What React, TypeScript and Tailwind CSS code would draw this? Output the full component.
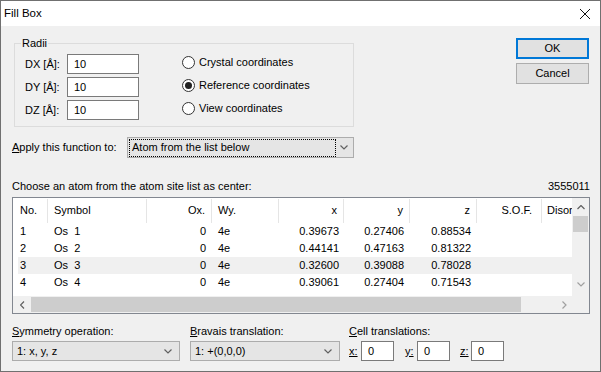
import React from 'react';

const ui = { fontFamily: '"Liberation Sans", Arial, sans-serif' };

const Chevron: React.FC<{ dir?: 'down' | 'up' | 'left' | 'right'; color?: string }> = ({ dir = 'down', color = '#606060' }) => {
  const d = {
    down: 'M0.5 0.5 L4 4 L7.5 0.5',
    up: 'M0.5 4 L4 0.5 L7.5 4',
    left: 'M4 0.5 L0.5 4 L4 7.5',
    right: 'M0.5 0.5 L4 4 L0.5 7.5',
  }[dir];
  const vert = dir === 'down' || dir === 'up';
  return (
    <svg width={vert ? 8 : 5} height={vert ? 5 : 8} viewBox={vert ? '0 0 8 5' : '0 0 5 8'}>
      <path d={d} fill="none" stroke={color} strokeWidth="1.2" />
    </svg>
  );
};

const TextBox: React.FC<{ value: string; w: string }> = ({ value, w }) => (
  <div className={`${w} h-[20px] bg-white border border-[#7a7a7a] flex items-center pl-[6px]`}>{value}</div>
);

const Radio: React.FC<{ label: string; checked?: boolean }> = ({ label, checked }) => (
  <div className="h-[20px] flex items-center">
    <div className="w-[13px] h-[13px] rounded-full border border-[#333] bg-white flex items-center justify-center">
      {checked && <div className="w-[7px] h-[7px] rounded-full bg-[#222]" />}
    </div>
    <span className="ml-[4px]">{label}</span>
  </div>
);

type Row = { no: string; sym: string; ox: string; wy: string; x: string; y: string; z: string };

const rows: Row[] = [
  { no: '1', sym: 'Os  1', ox: '0', wy: '4e', x: '0.39673', y: '0.27406', z: '0.88534' },
  { no: '2', sym: 'Os  2', ox: '0', wy: '4e', x: '0.44141', y: '0.47163', z: '0.81322' },
  { no: '3', sym: 'Os  3', ox: '0', wy: '4e', x: '0.32600', y: '0.39088', z: '0.78028' },
  { no: '4', sym: 'Os  4', ox: '0', wy: '4e', x: '0.39061', y: '0.27404', z: '0.71543' },
];

const Sep = () => <div className="w-px h-[24px] bg-[#e5e5e5] shrink-0" />;

function AtomList() {
  return (
    <div className="h-[117px] border border-[#828790] bg-white flex">
      <div className="w-[559px] flex flex-col">
        <div className="h-[98px] overflow-hidden">
          <div className="h-[25px] flex items-center whitespace-nowrap">
            <div className="w-[34px] shrink-0 pl-[7px]">No.</div>
            <Sep />
            <div className="w-[98px] shrink-0 pl-[6px]">Symbol</div>
            <Sep />
            <div className="w-[64px] shrink-0 text-right pr-[6px]">Ox.</div>
            <Sep />
            <div className="w-[66px] shrink-0 pl-[6px]">Wy.</div>
            <Sep />
            <div className="w-[64px] shrink-0 text-right pr-[6px]">x</div>
            <Sep />
            <div className="w-[65px] shrink-0 text-right pr-[6px]">y</div>
            <Sep />
            <div className="w-[66px] shrink-0 text-right pr-[6px]">z</div>
            <Sep />
            <div className="w-[64px] shrink-0 text-right pr-[9px]">S.O.F.</div>
            <Sep />
            <div className="w-[30px] shrink-0 pl-[5px]">Disor</div>
          </div>
          {rows.map((r, i) => (
            <div key={r.no} className={`h-[17px] ml-[5px] flex items-center whitespace-pre ${i === 2 ? 'bg-[#f0f0f0]' : ''}`}>
              <div className="w-[30px] shrink-0 pl-[2px]">{r.no}</div>
              <div className="w-[99px] shrink-0 pl-[6px]">{r.sym}</div>
              <div className="w-[65px] shrink-0 text-right pr-[6px]">{r.ox}</div>
              <div className="w-[67px] shrink-0 pl-[6px]">{r.wy}</div>
              <div className="w-[65px] shrink-0 text-right pr-[5px]">{r.x}</div>
              <div className="w-[66px] shrink-0 text-right pr-[6px]">{r.y}</div>
              <div className="w-[67px] shrink-0 text-right pr-[6px]">{r.z}</div>
            </div>
          ))}
        </div>
        <div className="h-[17px] bg-[#f0f0f0] flex items-center">
          <div className="w-[18px] flex justify-center"><Chevron dir="left" /></div>
          <div className="w-[490px] h-[15px] bg-[#cdcdcd]" />
          <div className="flex-1 flex justify-end pr-[5px]"><Chevron dir="right" color="#a0a0a0" /></div>
        </div>
      </div>
      <div className="w-[17px] flex flex-col bg-[#f0f0f0]">
        <div className="h-[18px] flex items-center justify-center"><Chevron dir="up" /></div>
        <div className="mx-px h-[16px] bg-[#cdcdcd]" />
        <div className="flex-1 flex items-end justify-center pb-[9px]"><Chevron dir="down" color="#a0a0a0" /></div>
        <div className="h-[17px] bg-[#f0f0f0]" />
      </div>
    </div>
  );
}

const Combo: React.FC<{ w: string; children: React.ReactNode }> = ({ w, children }) => (
  <div className={`${w} h-[20px] bg-[#e5e5e5] border border-[#acacac] flex items-center justify-between pl-[4px] pr-[7px]`}>
    <span>{children}</span>
    <Chevron />
  </div>
);

export default function App() {
  return (
    <div className="w-[601px] h-[372px] border border-[#707070] bg-[#f0f0f0] flex flex-col text-[11px] text-black" style={ui}>
      <div className="h-[25px] bg-white flex items-center justify-between pl-[3px] pr-[10px] shrink-0">
        <span className="text-[11.5px]">Fill Box</span>
        <svg width="10" height="10" viewBox="0 0 10 10">
          <path d="M0 0 L10 10 M10 0 L0 10" stroke="#111" strokeWidth="1" />
        </svg>
      </div>

      <div className="flex-1 pl-[11px] pr-[10px] flex flex-col">
        <div className="flex pt-[10px]">
          <fieldset className="ml-[2px] w-[340px] h-[91px] border border-[#dcdcdc] flex">
            <legend className="ml-[6px] px-px leading-[14px]">Radii</legend>
            <div className="flex pt-[4px] pl-[10px]">
              <div className="flex flex-col gap-[3px]">
                {['DX', 'DY', 'DZ'].map((k) => (
                  <div key={k} className="flex items-center h-[20px]">
                    <span className="w-[42px]">{k} [Å]:</span>
                    <TextBox value="10" w="w-[72px]" />
                  </div>
                ))}
              </div>
              <div className="ml-[43px] flex flex-col gap-[3px] -mt-[2px]">
                <Radio label="Crystal coordinates" />
                <Radio label="Reference coordinates" checked />
                <Radio label="View coordinates" />
              </div>
            </div>
          </fieldset>
          <div className="ml-auto mr-[1px] pt-[2px] flex flex-col gap-[4px]">
            <button className="w-[73px] h-[21px] bg-[#e1e1e1] border-2 border-[#0078d7] flex items-center justify-center">OK</button>
            <button className="w-[73px] h-[21px] bg-[#e1e1e1] border border-[#adadad] flex items-center justify-center">Cancel</button>
          </div>
        </div>

        <div className="flex items-center mt-[10px]">
          <span className="w-[115px]"><span className="underline">A</span>pply this function to:</span>
          <div className="w-[227px] h-[21px] bg-[#e5e5e5] border border-[#acacac] flex items-center pr-[5px]">
            <div className="ml-px w-[207px] h-[18px] border border-dotted border-black flex items-center pl-[2px]">Atom from the list below</div>
            <div className="flex-1 flex justify-end"><Chevron /></div>
          </div>
        </div>

        <div className="mt-[21px] h-[15px] flex items-center justify-between">
          <span>Choose an atom from the atom site list as center:</span>
          <span>3555011</span>
        </div>

        <div className="mt-[3px]">
          <AtomList />
        </div>

        <div className="mt-[9px] flex items-start">
          <div className="flex flex-col gap-[3px]">
            <span className="h-[15px]"><span className="underline">S</span>ymmetry operation:</span>
            <Combo w="w-[168px]">1: x, y, z</Combo>
          </div>
          <div className="ml-[10px] flex flex-col gap-[3px]">
            <span className="h-[15px]"><span className="underline">B</span>ravais translation:</span>
            <Combo w="w-[150px]">1: +(0,0,0)</Combo>
          </div>
          <div className="ml-[9px] flex flex-col gap-[3px]">
            <span className="h-[15px]"><span className="underline">C</span>ell translations:</span>
            <div className="flex items-center">
              <span className="underline w-[12px]">x:</span>
              <TextBox value="0" w="w-[33px]" />
              <span className="underline ml-[11px] w-[12px]">y:</span>
              <TextBox value="0" w="w-[33px]" />
              <span className="underline ml-[10px] w-[11px]">z:</span>
              <TextBox value="0" w="w-[33px]" />
            </div>
          </div>
        </div>
      </div>
    </div>
  );
}
